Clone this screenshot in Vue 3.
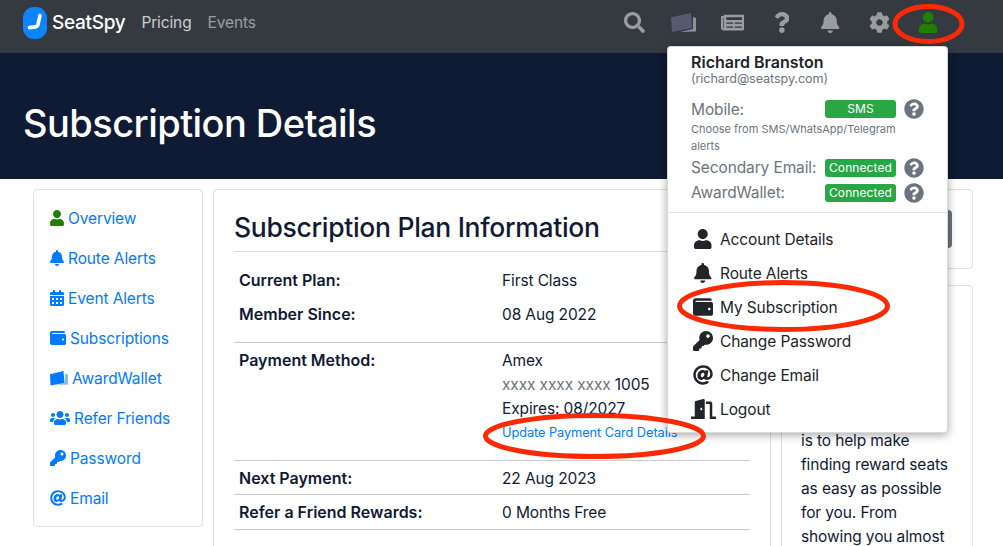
<script setup>
import { h } from 'vue'

const paths = {
  user: [448, 'M224 256c70.7 0 128-57.3 128-128S294.7 0 224 0 96 57.3 96 128s57.3 128 128 128zm89.6 32h-16.7c-22.2 10.2-46.9 16-72.9 16s-50.6-5.8-72.9-16h-16.7C60.2 288 0 348.2 0 422.4V464c0 26.5 21.5 48 48 48h352c26.5 0 48-21.5 48-48v-41.6c0-74.2-60.2-134.4-134.4-134.4z'],
  bell: [448, 'M224 512c35.32 0 63.97-28.65 63.97-64H160.03c0 35.35 28.65 64 63.97 64zm215.39-149.71c-19.32-20.76-55.47-51.99-55.47-154.29 0-77.7-54.48-139.9-127.94-155.16V32c0-17.67-14.32-32-31.98-32s-31.98 14.33-31.98 32v20.84C118.56 68.1 64.08 130.3 64.08 208c0 102.3-36.15 133.53-55.47 154.29-6 6.45-8.66 14.16-8.61 21.71.11 16.4 12.98 32 32.1 32h383.8c19.12 0 32-15.6 32.1-32 .05-7.55-2.61-15.27-8.61-21.71z'],
  search: [512, 'M505 442.7L405.3 343c-4.5-4.5-10.6-7-17-7H372c27.6-35.3 44-79.7 44-128C416 93.1 322.9 0 208 0S0 93.1 0 208s93.1 208 208 208c48.3 0 92.7-16.4 128-44v16.3c0 6.4 2.5 12.5 7 17l99.7 99.7c9.4 9.4 24.6 9.4 33.9 0l28.3-28.3c9.4-9.4 9.4-24.6.1-34zM208 336c-70.7 0-128-57.2-128-128 0-70.7 57.2-128 128-128 70.7 0 128 57.2 128 128 0 70.7-57.2 128-128 128z'],
  question: [384, 'M202.021 0C122.202 0 70.503 32.703 29.914 91.026c-7.363 10.58-5.093 25.086 5.178 32.874l43.138 32.709c10.373 7.865 25.132 6.026 33.253-4.148 25.049-31.381 43.63-49.449 82.757-49.449 30.764 0 68.816 19.799 68.816 49.631 0 22.552-18.617 34.134-48.993 51.164-35.423 19.86-82.299 44.576-82.299 106.405V320c0 13.255 10.745 24 24 24h72.471c13.255 0 24-10.745 24-24v-5.773c0-42.86 125.268-44.645 125.268-160.627C377.504 66.256 286.902 0 202.021 0zM192 373.459c-38.196 0-69.271 31.075-69.271 69.271 0 38.195 31.075 69.27 69.271 69.27s69.271-31.075 69.271-69.271-31.075-69.27-69.271-69.27z'],
  help: [512, 'M504 256c0 136.997-111.043 248-248 248S8 392.997 8 256C8 119.083 119.043 8 256 8s248 111.083 248 248zM262.655 90c-54.497 0-89.255 22.957-116.549 63.758-3.536 5.286-2.353 12.415 2.715 16.258l34.699 26.31c5.205 3.947 12.621 3.008 16.665-2.122 17.864-22.658 30.113-35.797 57.303-35.797 20.429 0 45.698 13.148 45.698 32.958 0 14.976-12.363 22.667-32.534 33.976C247.128 238.528 216 254.941 216 296v4c0 6.627 5.373 12 12 12h56c6.627 0 12-5.373 12-12v-1.333c0-28.462 83.186-29.647 83.186-106.667 0-58.002-60.165-102-116.531-102zM256 338c-25.365 0-46 20.635-46 46 0 25.364 20.635 46 46 46s46-20.636 46-46c0-25.365-20.635-46-46-46z'],
  cog: [512, 'M487.4 315.7l-42.6-24.6c4.3-23.2 4.3-47 0-70.2l42.6-24.6c4.9-2.8 7.1-8.6 5.5-14-11.1-35.6-30-67.8-54.7-94.6-3.8-4.1-10-5.1-14.8-2.3L380.8 110c-17.9-15.4-38.5-27.3-60.8-35.1V25.8c0-5.6-3.9-10.5-9.4-11.7-36.7-8.2-74.3-7.8-109.2 0-5.5 1.2-9.4 6.1-9.4 11.7V75c-22.2 7.9-42.8 19.8-60.8 35.1L88.7 85.5c-4.9-2.8-11-1.9-14.8 2.3-24.7 26.7-43.6 58.9-54.7 94.6-1.7 5.4.6 11.2 5.5 14L67.3 221c-4.3 23.2-4.3 47 0 70.2l-42.6 24.6c-4.9 2.8-7.1 8.6-5.5 14 11.1 35.6 30 67.8 54.7 94.6 3.8 4.1 10 5.1 14.8 2.3l42.6-24.6c17.9 15.4 38.5 27.3 60.8 35.1v49.2c0 5.6 3.9 10.5 9.4 11.7 36.7 8.2 74.3 7.8 109.2 0 5.5-1.2 9.4-6.1 9.4-11.7v-49.2c22.2-7.9 42.8-19.8 60.8-35.1l42.6 24.6c4.9 2.8 11 1.9 14.8-2.3 24.7-26.7 43.6-58.9 54.7-94.6 1.5-5.5-.7-11.3-5.6-14.1zM256 336c-44.1 0-80-35.9-80-80s35.9-80 80-80 80 35.9 80 80-35.9 80-80 80z'],
  wallet: [512, 'M461.2 128H80c-8.84 0-16-7.16-16-16s7.16-16 16-16h384c8.84 0 16-7.16 16-16 0-26.51-21.49-48-48-48H64C28.65 32 0 60.65 0 96v320c0 35.35 28.65 64 64 64h397.2c28.02 0 50.8-21.53 50.8-48V176c0-26.47-22.78-48-50.8-48zM416 336c-17.67 0-32-14.33-32-32s14.33-32 32-32 32 14.33 32 32-14.33 32-32 32z'],
  key: [512, 'M512 176.001C512 273.203 433.202 352 336 352c-11.22 0-22.19-1.062-32.827-3.069l-24.012 27.014A23.999 23.999 0 0 1 261.223 384H224v40c0 13.255-10.745 24-24 24h-40v40c0 13.255-10.745 24-24 24H24c-13.255 0-24-10.745-24-24v-78.059c0-6.365 2.529-12.47 7.029-16.971l161.802-161.802C163.108 213.814 160 195.271 160 176 160 78.798 238.797.001 335.999 0 433.488-.001 512 78.511 512 176.001zM336 128c0 26.51 21.49 48 48 48s48-21.49 48-48-21.49-48-48-48-48 21.49-48 48z'],
  at: [512, 'M256 8C118.941 8 8 118.919 8 256c0 137.059 110.919 248 248 248 48.154 0 95.342-14.14 135.408-40.223 12.005-7.815 14.625-24.288 5.552-35.372l-10.177-12.433c-7.671-9.371-21.179-11.667-31.373-5.129C325.92 429.757 291.314 440 256 440c-101.458 0-184-82.542-184-184S154.542 72 256 72c100.139 0 184 57.619 184 160 0 38.786-21.093 79.742-58.17 83.693-17.349-.454-16.91-12.857-13.476-30.024l23.433-121.11C394.653 149.75 383.308 136 368.225 136h-44.981a13.518 13.518 0 0 0-13.432 11.993l-.01.092c-14.697-17.901-40.448-21.775-59.971-21.775-74.58 0-137.831 62.234-137.831 151.46 0 65.303 36.785 105.87 96 105.87 26.984 0 57.369-15.637 74.991-38.333 9.522 34.104 40.613 34.103 70.71 34.103C462.609 379.41 504 307.798 504 232 504 95.653 394.023 8 256 8zm-21.68 304.43c-22.249 0-36.07-15.623-36.07-40.771 0-44.993 30.779-72.729 58.63-72.729 22.292 0 35.601 15.241 35.601 40.77 0 45.061-33.875 72.73-58.161 72.73z'],
  door: [640, 'M624 448h-80V113.45C544 86.19 522.47 64 496 64H384v64h96v384h144c8.84 0 16-7.16 16-16v-32c0-8.84-7.16-16-16-16zM312.24 1.01l-192 49.74C105.99 54.44 96 67.7 96 82.92V448H16c-8.84 0-16 7.16-16 16v32c0 8.84 7.16 16 16 16h336V33.18c0-21.58-19.56-37.41-39.76-32.17zM264 288c-13.25 0-24-14.33-24-32s10.75-32 24-32 24 14.33 24 32-10.75 32-24 32z'],
  calendar: [448, 'M0 464c0 26.5 21.5 48 48 48h352c26.5 0 48-21.5 48-48V192H0v272zm320-196c0-6.6 5.4-12 12-12h40c6.6 0 12 5.4 12 12v40c0 6.6-5.4 12-12 12h-40c-6.6 0-12-5.4-12-12v-40zm0 128c0-6.6 5.4-12 12-12h40c6.6 0 12 5.4 12 12v40c0 6.6-5.4 12-12 12h-40c-6.6 0-12-5.4-12-12v-40zM192 268c0-6.6 5.4-12 12-12h40c6.6 0 12 5.4 12 12v40c0 6.6-5.4 12-12 12h-40c-6.6 0-12-5.4-12-12v-40zm0 128c0-6.6 5.4-12 12-12h40c6.6 0 12 5.4 12 12v40c0 6.6-5.4 12-12 12h-40c-6.6 0-12-5.4-12-12v-40zM64 268c0-6.6 5.4-12 12-12h40c6.6 0 12 5.4 12 12v40c0 6.6-5.4 12-12 12H76c-6.6 0-12-5.4-12-12v-40zm0 128c0-6.6 5.4-12 12-12h40c6.6 0 12 5.4 12 12v40c0 6.6-5.4 12-12 12H76c-6.6 0-12-5.4-12-12v-40zM400 64h-48V16c0-8.8-7.2-16-16-16h-32c-8.8 0-16 7.2-16 16v48H160V16c0-8.8-7.2-16-16-16h-32c-8.8 0-16 7.2-16 16v48H48C21.5 64 0 85.5 0 112v48h448v-48c0-26.5-21.5-48-48-48z'],
  users: [640, 'M96 224c35.3 0 64-28.7 64-64s-28.7-64-64-64-64 28.7-64 64 28.7 64 64 64zm448 0c35.3 0 64-28.7 64-64s-28.7-64-64-64-64 28.7-64 64 28.7 64 64 64zm32 32h-64c-17.6 0-33.5 7.1-45.1 18.6 40.3 22.1 68.9 62 75.1 109.4h66c17.7 0 32-14.3 32-32v-32c0-35.3-28.7-64-64-64zm-256 0c61.9 0 112-50.1 112-112S381.9 32 320 32 208 82.1 208 144s50.1 112 112 112zm76.8 32h-8.3c-20.8 10-43.9 16-68.5 16s-47.6-6-68.5-16h-8.3C179.6 288 128 339.6 128 403.2V432c0 26.5 21.5 48 48 48h288c26.5 0 48-21.5 48-48v-28.8c0-63.6-51.6-115.2-115.2-115.2zm-223.7-13.4C161.5 263.1 145.6 256 128 256H64c-35.3 0-64 28.7-64 64v32c0 17.7 14.3 32 32 32h65.9c6.3-47.4 34.9-87.3 75.2-109.4z'],
  news: [576, 'M552 64H88c-13.255 0-24 10.745-24 24v8H24c-13.255 0-24 10.745-24 24v272c0 30.928 25.072 56 56 56h472c26.51 0 48-21.49 48-48V88c0-13.255-10.745-24-24-24zM56 400a8 8 0 0 1-8-8V144h16v248a8 8 0 0 1-8 8zm236-16H140c-6.627 0-12-5.373-12-12v-8c0-6.627 5.373-12 12-12h152c6.627 0 12 5.373 12 12v8c0 6.627-5.373 12-12 12zm208 0H348c-6.627 0-12-5.373-12-12v-8c0-6.627 5.373-12 12-12h152c6.627 0 12 5.373 12 12v8c0 6.627-5.373 12-12 12zm-208-96H140c-6.627 0-12-5.373-12-12v-8c0-6.627 5.373-12 12-12h152c6.627 0 12 5.373 12 12v8c0 6.627-5.373 12-12 12zm208 0H348c-6.627 0-12-5.373-12-12v-8c0-6.627 5.373-12 12-12h152c6.627 0 12 5.373 12 12v8c0 6.627-5.373 12-12 12zm0-96H140c-6.627 0-12-5.373-12-12v-40c0-6.627 5.373-12 12-12h360c6.627 0 12 5.373 12 12v40c0 6.627-5.373 12-12 12z'],
}

// font-awesome style glyph, sized by height
const Icon = (props) => {
  const [w, d] = paths[props.name]
  return h('svg', { viewBox: `0 0 ${w} 512`, class: 'ico', fill: 'currentColor' }, [h('path', { d })])
}
Icon.props = ['name']

const navIcons = ['search', 'aw', 'news', 'question', 'bell', 'cog', 'user']

const sideLinks = [
  { icon: 'user', label: 'Overview', green: true },
  { icon: 'bell', label: 'Route Alerts' },
  { icon: 'calendar', label: 'Event Alerts' },
  { icon: 'wallet', label: 'Subscriptions' },
  { icon: 'aw', label: 'AwardWallet' },
  { icon: 'users', label: 'Refer Friends' },
  { icon: 'key', label: 'Password' },
  { icon: 'at', label: 'Email' },
]

const statusRows = [
  { label: 'Secondary Email:', badge: 'Connected' },
  { label: 'AwardWallet:', badge: 'Connected' },
]

const menuItems = [
  { icon: 'user', label: 'Account Details' },
  { icon: 'bell', label: 'Route Alerts' },
  { icon: 'wallet', label: 'My Subscription' },
  { icon: 'key', label: 'Change Password' },
  { icon: 'at', label: 'Change Email' },
  { icon: 'door', label: 'Logout' },
]
</script>

<template>
  <div class="page">
    <nav class="navbar">
      <a class="brand">
        <svg class="logo" viewBox="0 0 24 32">
          <rect width="24" height="32" rx="11" fill="#0d84ff" />
          <path d="M17 8.500 15 17.500c-.4 1.500-1.300 2.200-2.800 2.400l-5.700.7" fill="none" stroke="#fff" stroke-width="3.600" stroke-linecap="round" stroke-linejoin="round" />
        </svg>
        <span>SeatSpy</span>
      </a>
      <a class="nav-link">Pricing</a>
      <a class="nav-link dim">Events</a>
      <div class="nav-icons">
        <span v-for="n in navIcons" :key="n" class="nav-icon" :class="{ 'nav-user': n === 'user' }">
          <svg v-if="n === 'aw'" class="aw-nav" viewBox="0 0 26 21">
            <path d="M22 5l3 1v13.500L9 20l13-3z" fill="#8f9296" />
            <path d="M0 5.300 20 1l1 15-20 4z" fill="#565a70" />
          </svg>
          <Icon v-else :name="n" />
        </span>
      </div>
    </nav>

    <header class="hero">
      <h1>Subscription Details</h1>
    </header>

    <main class="content">
      <aside class="card side">
        <a v-for="s in sideLinks" :key="s.label" class="side-link">
          <svg v-if="s.icon === 'aw'" class="aw-side" viewBox="0 0 18 16">
            <path d="M15 3.500l3 1v10L7 15l8-2z" fill="#7dbcff" />
            <path d="M0 4.300 13.500 1l1 12L.5 15.500z" fill="#007bff" />
          </svg>
          <Icon v-else :name="s.icon" :class="{ green: s.green }" />
          <span>{{ s.label }}</span>
        </a>
      </aside>

      <section class="card main">
        <h2>Subscription Plan Information</h2>
        <table>
          <tbody>
            <tr><th>Current Plan:</th><td>First Class</td></tr>
            <tr class="last-of-group"><th>Member Since:</th><td>08 Aug 2022</td></tr>
            <tr class="ruled">
              <th>Payment Method:</th>
              <td>
                <div>Amex</div>
                <div><span class="muted">xxxx xxxx xxxx</span> 1005</div>
                <div>Expires: 08/2027</div>
                <a class="update">Update Payment Card Details</a>
              </td>
            </tr>
            <tr class="ruled short"><th>Next Payment:</th><td>22 Aug 2023</td></tr>
            <tr class="ruled closing"><th>Refer a Friend Rewards:</th><td>0 Months Free</td></tr>
          </tbody>
        </table>
      </section>

      <aside class="right">
        <div class="card cta"><span class="cta-btn"></span></div>
        <div class="card about">
          <p>Our goal at SeatSpy<br />is to help make finding reward seats as easy as possible for you. From showing you almost</p>
        </div>
      </aside>
    </main>

    <div class="dropdown">
      <div class="who">
        <strong>Richard Branston</strong>
        <small>(richard@seatspy.com)</small>
        <div class="status first">
          <span>Mobile:</span>
          <b class="badge sms">SMS</b>
          <Icon name="help" class="help" />
        </div>
        <p class="hint">Choose from SMS/WhatsApp/Telegram alerts</p>
        <div v-for="r in statusRows" :key="r.label" class="status">
          <span>{{ r.label }}</span>
          <b class="badge">{{ r.badge }}</b>
          <Icon name="help" class="help" />
        </div>
      </div>
      <div class="menu">
        <a v-for="m in menuItems" :key="m.label" class="menu-item">
          <span class="menu-ico"><Icon :name="m.icon" /></span>
          <span class="menu-label">{{ m.label }}</span>
        </a>
      </div>
    </div>

    <!-- red marks drawn over the screenshot -->
    <svg class="marks" viewBox="0 0 1003 546" fill="none" stroke="#fb2a05" stroke-width="5">
      <ellipse cx="928.500" cy="24" rx="33.500" ry="17.500" />
      <ellipse cx="783.500" cy="306" rx="104" ry="23.500" />
      <ellipse cx="594.500" cy="436" rx="109" ry="20.500" />
    </svg>
  </div>
</template>

<style scoped>
.page {
  position: relative;
  height: 546px;
  overflow: hidden;
  font-family: Inter, "Noto Sans", sans-serif;
  font-size: 15.500px;
  letter-spacing: -0.12px;
  line-height: 24px;
  color: #111a33;
  background: #fff;
}

.ico {
  display: block;
  height: 1em;
  width: auto;
  flex: none;
}

.navbar {
  display: flex;
  align-items: center;
  height: 53px;
  padding: 0 50px 8px 23px;
  box-sizing: border-box;
  background: #343a40;
}

.brand {
  display: flex;
  align-items: center;
  gap: 5px;
  margin-right: 16px;
  color: #fff;
  font-size: 19px;
  font-weight: 500;
  letter-spacing: -0.3px;
}

.logo {
  width: 24px;
  height: 32px;
}

.nav-link {
  margin-right: 16px;
  color: rgba(255, 255, 255, 0.75);
}

.nav-link.dim {
  color: rgba(255, 255, 255, 0.5);
}

.nav-icons {
  display: flex;
  margin-left: auto;
}

.nav-icon {
  display: flex;
  justify-content: center;
  width: 49px;
  font-size: 21px;
  color: rgba(255, 255, 255, 0.5);
}

.nav-user {
  color: #1f8000;
}

.aw-nav {
  width: 26px;
  height: 21px;
}

.hero {
  display: flex;
  align-items: center;
  height: 126px;
  padding: 14px 0 0 23px;
  box-sizing: border-box;
  background: #0f1a35;
}

.hero h1 {
  margin: 0;
  color: #fff;
  font-size: 38px;
  font-weight: 500;
  letter-spacing: -0.55px;
  line-height: 44px;
}

.content {
  display: flex;
  align-items: flex-start;
  gap: 10px;
  padding: 10px 30px 0 33px;
}

.card {
  box-sizing: border-box;
  background: #fff;
  border: 1px solid #e0e0e0;
  border-radius: 4px;
}

.side {
  display: flex;
  flex-direction: column;
  width: 170px;
  height: 338px;
  padding: 8px 16px;
  flex: none;
}

.side-link {
  display: flex;
  align-items: center;
  gap: 4px;
  height: 40px;
  flex: none;
  font-size: 16px;
  color: #007bff;
}

.side-link span {
  padding-top: 2px;
  font-size: 15.500px;
}

.side-link .green {
  color: #1f8000;
}

.aw-side {
  width: 18px;
  height: 16px;
}

.main {
  width: 558px;
  height: 400px;
  padding: 19px 20px;
  flex: none;
}

.main h2 {
  margin: 0;
  padding-bottom: 5px;
  border-bottom: 1px solid #ddd;
  font-size: 26.500px;
  font-weight: 500;
  letter-spacing: -0.3px;
  line-height: 37px;
}

table {
  width: 100%;
  margin-top: 11px;
  border-collapse: collapse;
}

th,
td {
  text-align: left;
  vertical-align: top;
}

th {
  width: 253px;
  padding: 5px;
  font-size: 16px;
  font-weight: 600;
  letter-spacing: 0;
}

td {
  padding: 6px 5px 4px;
}

.last-of-group th {
  padding-bottom: 16px;
}

.last-of-group td {
  padding-bottom: 15px;
}

.ruled th,
.ruled td {
  border-top: 1px solid #ccc;
}

.short th {
  padding-bottom: 4px;
}

.short td {
  padding-bottom: 3px;
}

.closing th,
.closing td {
  border-bottom: 1px solid #ccc;
}

.muted {
  color: #6c757d;
}

.update {
  display: block;
  margin-bottom: 11px;
  color: #007bff;
  font-size: 12.800px;
  letter-spacing: -0.08px;
}

.right {
  display: flex;
  flex-direction: column;
  gap: 16px;
  width: 192px;
  flex: none;
}

.cta {
  height: 80px;
  padding: 20px;
}

.cta-btn {
  display: block;
  height: 38px;
  border-radius: 4px;
  background: #6c757d;
}

.about {
  padding: 119px 19px 0;
  height: 300px;
}

.about p {
  margin: 0;
}

.dropdown {
  position: absolute;
  top: 46px;
  left: 667px;
  width: 281px;
  height: 387px;
  box-sizing: border-box;
  background: #fff;
  border: 1px solid rgba(0, 0, 0, 0.15);
  border-radius: 4px;
  box-shadow: 0 2px 10px rgba(0, 0, 0, 0.35);
}

.who {
  padding: 3px 23px 7px;
  border-bottom: 1px solid #e6e6e6;
  color: #6c757d;
}

.who strong {
  display: block;
  color: #212529;
  font-size: 16px;
  font-weight: 600;
  letter-spacing: 0;
}

.who small {
  display: block;
  margin-top: -5px;
  font-size: 12.700px;
  line-height: 20px;
}

.status {
  display: flex;
  align-items: center;
  height: 25px;
}

.status.first span {
  padding-top: 2px;
}

.status.first {
  margin-top: 7px;
}

.status span {
  flex: 1;
}

.hint {
  margin: 0;
  font-size: 11px;
  letter-spacing: 0;
  line-height: 17px;
}

.badge {
  width: 71px;
  height: 18px;
  border-radius: 3px;
  background: #28a745;
  color: #fff;
  font-size: 12px;
  font-weight: 400;
  letter-spacing: 0.1px;
  line-height: 18px;
  text-align: center;
}

.help {
  margin-left: 8px;
  font-size: 20px;
  color: #6c757d;
}

.menu {
  padding-top: 9px;
}

.menu-item {
  display: flex;
  align-items: center;
  gap: 6px;
  height: 34px;
  padding-left: 24px;
  color: #212529;
}

.menu-ico {
  display: flex;
  justify-content: center;
  width: 22px;
  font-size: 20px;
}

.menu-label {
  padding-top: 2px;
}

.marks {
  position: absolute;
  top: 0;
  left: 0;
  width: 1003px;
  height: 546px;
  pointer-events: none;
}
</style>

<style>
html,
body {
  margin: 0;
  overflow: hidden;
}
</style>
